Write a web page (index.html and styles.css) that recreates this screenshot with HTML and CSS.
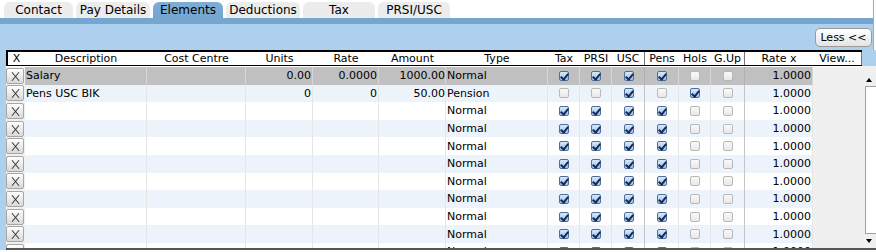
FILE: index.html
```html
<!DOCTYPE html>
<html>
<head>
<meta charset="utf-8">
<link rel="stylesheet" href="styles.css">
</head>
<body>
<div class="page">
  <div class="top">
    <div class="tabs">
      <div class="tab w69">Contact</div>
      <div class="tab w74">Pay Details</div>
      <div class="tab w70 active">Elements</div>
      <div class="tab w74">Deductions</div>
      <div class="tab w72">Tax</div>
      <div class="tab w72">PRSI/USC</div>
    </div>
    <div class="bar"></div>
    <div class="toolbar"><button class="less">Less &lt;&lt;</button></div>
  </div>
  <div class="gridwrap">
    <div class="strip"></div>
    <div class="grid">
      <div class="head">
        <div class="hc">X</div>
        <div class="hc">Description</div>
        <div class="hc">Cost Centre</div>
        <div class="hc">Units</div>
        <div class="hc">Rate</div>
        <div class="hc">Amount</div>
        <div class="hc">Type</div>
        <div class="hc">Tax</div>
        <div class="hc">PRSI</div>
        <div class="hc sep">USC</div>
        <div class="hc">Pens</div>
        <div class="hc">Hols</div>
        <div class="hc sep">G.Up</div>
        <div class="hc">Rate x</div>
        <div class="hc sep">View...</div>
      </div>
      <div class="body">
        <div class="rows">
          <div class="row sel">
            <div class="c x"><span class="xb"></span></div>
            <div class="c">Salary</div><div class="c"></div>
            <div class="c r">0.00</div><div class="c r">0.0000</div><div class="c r am">1000.00</div>
            <div class="c t">Normal</div>
            <div class="c k"><span class="cb on"></span></div><div class="c k"><span class="cb on"></span></div><div class="c k dk"><span class="cb on"></span></div>
            <div class="c k"><span class="cb on"></span></div><div class="c k"><span class="cb"></span></div><div class="c k dk"><span class="cb"></span></div>
            <div class="c r">1.0000</div><div class="c v"></div>
          </div>
          <div class="row alt">
            <div class="c x"><span class="xb"></span></div>
            <div class="c">Pens USC BIK</div><div class="c"></div>
            <div class="c r">0</div><div class="c r">0</div><div class="c r am">50.00</div>
            <div class="c t">Pension</div>
            <div class="c k"><span class="cb"></span></div><div class="c k"><span class="cb"></span></div><div class="c k dk"><span class="cb on"></span></div>
            <div class="c k"><span class="cb"></span></div><div class="c k"><span class="cb on"></span></div><div class="c k dk"><span class="cb"></span></div>
            <div class="c r">1.0000</div><div class="c v"></div>
          </div>
          <div class="row">
            <div class="c x"><span class="xb"></span></div>
            <div class="c"></div><div class="c"></div><div class="c"></div><div class="c"></div><div class="c"></div>
            <div class="c t">Normal</div>
            <div class="c k"><span class="cb on"></span></div><div class="c k"><span class="cb on"></span></div><div class="c k dk"><span class="cb on"></span></div>
            <div class="c k"><span class="cb on"></span></div><div class="c k"><span class="cb"></span></div><div class="c k dk"><span class="cb"></span></div>
            <div class="c r">1.0000</div><div class="c v"></div>
          </div>
          <div class="row alt">
            <div class="c x"><span class="xb"></span></div>
            <div class="c"></div><div class="c"></div><div class="c"></div><div class="c"></div><div class="c"></div>
            <div class="c t">Normal</div>
            <div class="c k"><span class="cb on"></span></div><div class="c k"><span class="cb on"></span></div><div class="c k dk"><span class="cb on"></span></div>
            <div class="c k"><span class="cb on"></span></div><div class="c k"><span class="cb"></span></div><div class="c k dk"><span class="cb"></span></div>
            <div class="c r">1.0000</div><div class="c v"></div>
          </div>
          <div class="row">
            <div class="c x"><span class="xb"></span></div>
            <div class="c"></div><div class="c"></div><div class="c"></div><div class="c"></div><div class="c"></div>
            <div class="c t">Normal</div>
            <div class="c k"><span class="cb on"></span></div><div class="c k"><span class="cb on"></span></div><div class="c k dk"><span class="cb on"></span></div>
            <div class="c k"><span class="cb on"></span></div><div class="c k"><span class="cb"></span></div><div class="c k dk"><span class="cb"></span></div>
            <div class="c r">1.0000</div><div class="c v"></div>
          </div>
          <div class="row alt">
            <div class="c x"><span class="xb"></span></div>
            <div class="c"></div><div class="c"></div><div class="c"></div><div class="c"></div><div class="c"></div>
            <div class="c t">Normal</div>
            <div class="c k"><span class="cb on"></span></div><div class="c k"><span class="cb on"></span></div><div class="c k dk"><span class="cb on"></span></div>
            <div class="c k"><span class="cb on"></span></div><div class="c k"><span class="cb"></span></div><div class="c k dk"><span class="cb"></span></div>
            <div class="c r">1.0000</div><div class="c v"></div>
          </div>
          <div class="row">
            <div class="c x"><span class="xb"></span></div>
            <div class="c"></div><div class="c"></div><div class="c"></div><div class="c"></div><div class="c"></div>
            <div class="c t">Normal</div>
            <div class="c k"><span class="cb on"></span></div><div class="c k"><span class="cb on"></span></div><div class="c k dk"><span class="cb on"></span></div>
            <div class="c k"><span class="cb on"></span></div><div class="c k"><span class="cb"></span></div><div class="c k dk"><span class="cb"></span></div>
            <div class="c r">1.0000</div><div class="c v"></div>
          </div>
          <div class="row alt">
            <div class="c x"><span class="xb"></span></div>
            <div class="c"></div><div class="c"></div><div class="c"></div><div class="c"></div><div class="c"></div>
            <div class="c t">Normal</div>
            <div class="c k"><span class="cb on"></span></div><div class="c k"><span class="cb on"></span></div><div class="c k dk"><span class="cb on"></span></div>
            <div class="c k"><span class="cb on"></span></div><div class="c k"><span class="cb"></span></div><div class="c k dk"><span class="cb"></span></div>
            <div class="c r">1.0000</div><div class="c v"></div>
          </div>
          <div class="row">
            <div class="c x"><span class="xb"></span></div>
            <div class="c"></div><div class="c"></div><div class="c"></div><div class="c"></div><div class="c"></div>
            <div class="c t">Normal</div>
            <div class="c k"><span class="cb on"></span></div><div class="c k"><span class="cb on"></span></div><div class="c k dk"><span class="cb on"></span></div>
            <div class="c k"><span class="cb on"></span></div><div class="c k"><span class="cb"></span></div><div class="c k dk"><span class="cb"></span></div>
            <div class="c r">1.0000</div><div class="c v"></div>
          </div>
          <div class="row alt">
            <div class="c x"><span class="xb"></span></div>
            <div class="c"></div><div class="c"></div><div class="c"></div><div class="c"></div><div class="c"></div>
            <div class="c t">Normal</div>
            <div class="c k"><span class="cb on"></span></div><div class="c k"><span class="cb on"></span></div><div class="c k dk"><span class="cb on"></span></div>
            <div class="c k"><span class="cb on"></span></div><div class="c k"><span class="cb"></span></div><div class="c k dk"><span class="cb"></span></div>
            <div class="c r">1.0000</div><div class="c v"></div>
          </div>
          <div class="row">
            <div class="c x"><span class="xb"></span></div>
            <div class="c"></div><div class="c"></div><div class="c"></div><div class="c"></div><div class="c"></div>
            <div class="c t">Normal</div>
            <div class="c k"><span class="cb on"></span></div><div class="c k"><span class="cb on"></span></div><div class="c k dk"><span class="cb on"></span></div>
            <div class="c k"><span class="cb on"></span></div><div class="c k"><span class="cb"></span></div><div class="c k dk"><span class="cb"></span></div>
            <div class="c r">1.0000</div><div class="c v"></div>
          </div>
        </div>
        <div class="scroll">
          <div class="sbtn up"><span class="arr-up"></span></div>
          <div class="thumb"></div>
          <div class="sbtn down"><span class="arr-down"></span></div>
        </div>
      </div>
    </div>
  </div>
</div>
</body>
</html>
```
FILE: styles.css
```css
* { box-sizing: border-box; }
html, body { margin: 0; padding: 0; background: #fff; }
body { font-family: "DejaVu Sans", Verdana, sans-serif; font-size: 11px; color: #000; }
.page { width: 876px; height: 252px; overflow: hidden; }

.top { width: 874px; border-right: 1px solid #a8a8a8; }
.tabs { height: 18px; display: flex; align-items: flex-end; gap: 3px; padding-left: 4px; }
.tab { height: 16px; line-height: 16px; font-size: 12px; text-align: center; background: #ececec; border-radius: 6px 6px 0 0; white-space: nowrap; }
.tab.active { background: linear-gradient(#7eaed6, #74a6d0); }
.w69 { width: 69px; } .w70 { width: 70px; } .w72 { width: 72px; } .w74 { width: 74px; }
.bar { height: 6px; background: #74a6d0; }
.toolbar { height: 26px; background: #aed0ef; display: flex; justify-content: flex-end; align-items: center; padding-right: 1px; }
.less { width: 57px; height: 19px; padding: 0; text-align: center; font-family: "DejaVu Sans", Verdana, sans-serif; font-size: 11px; color: #000; border: 1px solid #9a9a9a; border-radius: 5px; background: linear-gradient(#ffffff, #e4e4e4); }

.gridwrap { display: flex; height: 200px; }
.strip { width: 6px; background: #aed0ef; }
.grid { width: 870px; background: #aed0ef; border-bottom: 2px solid #555; }
.head { width: 856px; height: 16px; display: grid; grid-template-columns: 17px 122px 99px 67px 66px 67px 102px 32px 32px 33px 34px 32px 34px 68px 49px; border-top: 2px solid #000; border-left: 2px solid #000; border-bottom: 1px solid #000; background: #fff; }
.hc { line-height: 13px; text-align: center; white-space: nowrap; }
.hc.sep { border-right: 1px solid #777; }

.body { display: flex; height: 182px; overflow: hidden; background: #fff; }
.rows { width: 856px; display: grid; grid-auto-rows: 17.6px; padding-top: 1px; }
.row { display: grid; grid-template-columns: 19px 122px 99px 67px 66px 67px 102px 32px 32px 33px 34px 32px 34px 68px 49px; background: #fff; }
.row.alt { background: #edf3fa; }
.row.sel { background: #c0c0c0; }
.c { display: flex; align-items: center; border-right: 1px solid #e6e6e6; white-space: nowrap; overflow: hidden; padding-left: 1px; }
.row.sel .c { border-right-color: #d6d6d6; }
.c.r { justify-content: flex-end; padding: 0 1px 0 0; }
.c.am { padding: 0; overflow: visible; }
.c.t { padding-left: 1px; }
.c.k { justify-content: center; }
.c.dk { border-right-color: #c4c4c4; }
.row.sel .c.dk { border-right-color: #b0b0b0; }
.c.x { background: #f0f0f0; border-right: none; padding: 0; justify-content: flex-start; }
.c.v { background: #f0f0f0; border-right: none; }

.xb { width: 18px; height: 16px; border: 1px solid #a6a6a6; border-radius: 2px; background: linear-gradient(#ffffff, #d8d8d8); position: relative; }
.xb::before, .xb::after { content: ""; position: absolute; left: 8px; top: 2px; width: 1px; height: 11px; background: #333; }
.xb::before { transform: rotate(40deg); }
.xb::after { transform: rotate(-40deg); }

.cb { width: 10px; height: 10px; border: 1px solid #b8b8b8; border-radius: 2px; background: linear-gradient(#fafafa, #e8e8e8); position: relative; }
.cb.on { border-color: #4f6f98; background: linear-gradient(#dbe9f8, #9cc0e4); }
.cb.on::after { content: ""; position: absolute; left: 2px; top: 0px; width: 3px; height: 6px; border: solid #142a5c; border-width: 0 2px 2px 0; transform: rotate(40deg); }

.scroll { width: 14px; background: #f0f0f0; display: flex; flex-direction: column; }
.sbtn { display: flex; justify-content: center; }
.sbtn.up { height: 20px; align-items: flex-end; padding-bottom: 4px; }
.sbtn.down { height: 14px; align-items: center; }
.thumb { height: 148px; margin-left: 3px; border: 1px solid #a0a0a0; border-right: none; background: #fff; }
.arr-up { width: 0; height: 0; border-left: 3px solid transparent; border-right: 3px solid transparent; border-bottom: 4px solid #000; }
.arr-down { width: 0; height: 0; border-left: 3px solid transparent; border-right: 3px solid transparent; border-top: 4px solid #000; }
```
